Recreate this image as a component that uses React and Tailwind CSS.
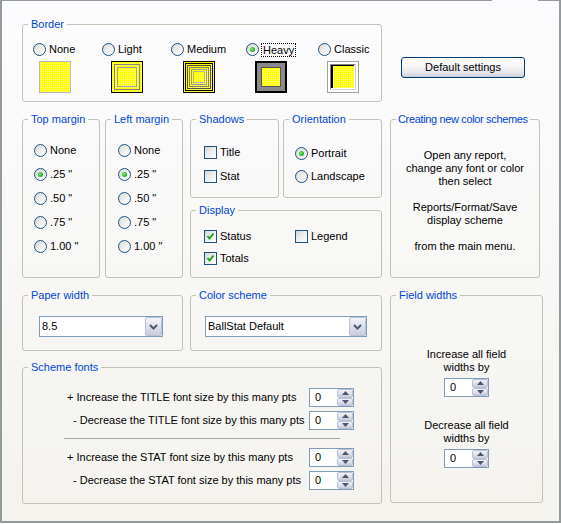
import React from "react";

function Group({ title, className, children, tight }) {
  return (
    <fieldset className={"min-w-0 shrink-0 rounded-[3px] border border-[#c3c3ba] " + className}>
      <legend
        className={
          "ml-[5px] h-[13px] whitespace-nowrap leading-[13px] text-[#0046d5] " +
          (tight ? "px-[2px] tracking-[-0.35px]" : "px-[3px]")
        }
      >
        {title}
      </legend>
      {children}
    </fieldset>
  );
}

function Radio({ checked }) {
  return (
    <span className="flex h-[13px] w-[13px] shrink-0 items-center justify-center rounded-full border border-[#1c5180] bg-[linear-gradient(135deg,#d6d6d0_0%,#ececea_45%,#ffffff_100%)]">
      {checked && (
        <span className="h-[5px] w-[5px] rounded-full bg-[radial-gradient(circle_at_40%_40%,#8cf08c_0%,#2fbf2f_45%,#1a8f1a_100%)]" />
      )}
    </span>
  );
}

function Check({ checked }) {
  return (
    <span className="flex h-[13px] w-[13px] shrink-0 items-center justify-center border border-[#1c5180] bg-[linear-gradient(135deg,#d6d6d0_0%,#ececea_45%,#ffffff_100%)]">
      {checked && (
        <svg width="9" height="9" viewBox="0 0 9 9">
          <polyline points="1.5,4 3.5,6.5 7.5,1.5" fill="none" stroke="#21a121" strokeWidth="2" />
        </svg>
      )}
    </span>
  );
}

function RadioItem({ checked, label, className = "" }) {
  return (
    <div className={"flex h-[13px] items-center gap-[3px] " + className}>
      <Radio checked={checked} />
      <span className="whitespace-nowrap leading-[13px]">{label}</span>
    </div>
  );
}

function CheckItem({ checked, label }) {
  return (
    <div className="flex h-[13px] items-center gap-[3px]">
      <Check checked={checked} />
      <span className="leading-[13px]">{label}</span>
    </div>
  );
}

function YellowPattern({ id }) {
  return (
    <defs>
      <pattern id={id} width="2" height="2" patternUnits="userSpaceOnUse">
        <rect width="2" height="2" fill="#ffff00" />
        <rect width="1" height="1" fill="#ffff90" />
      </pattern>
    </defs>
  );
}

function Swatch({ kind }) {
  const id = "yp-" + kind;
  const fill = `url(#${id})`;
  return (
    <svg width="32" height="32" viewBox="0 0 32 32" shapeRendering="crispEdges" className="block shrink-0">
      <YellowPattern id={id} />
      {kind === "none" && <rect x="0.5" y="0.5" width="31" height="31" fill={fill} stroke="#b8b8b8" />}
      {kind === "light" && (
        <g>
          <rect x="0.5" y="0.5" width="31" height="31" fill={fill} stroke="#000" />
          <rect x="3.5" y="3.5" width="25" height="25" fill="none" stroke="#808080" />
          <rect x="6.5" y="6.5" width="19" height="19" fill="none" stroke="#a0a0a0" />
        </g>
      )}
      {kind === "medium" && (
        <g>
          <rect x="0.5" y="0.5" width="31" height="31" fill={fill} stroke="#000" />
          <rect x="2.5" y="2.5" width="27" height="27" fill="none" stroke="#000" />
          <rect x="4.5" y="4.5" width="23" height="23" fill="none" stroke="#505050" />
          <rect x="6.5" y="6.5" width="19" height="19" fill="none" stroke="#808080" />
          <rect x="8.5" y="8.5" width="15" height="15" fill="none" stroke="#989898" />
          <rect x="10.5" y="10.5" width="11" height="11" fill="none" stroke="#b0b0b0" />
        </g>
      )}
      {kind === "heavy" && (
        <g>
          <rect x="0" y="0" width="32" height="32" fill="#000" />
          <rect x="2" y="2" width="28" height="28" fill="#8a8a8a" />
          <rect x="6" y="6" width="20" height="20" fill="#555" />
          <rect x="7" y="7" width="18" height="18" fill={fill} />
        </g>
      )}
      {kind === "classic" && (
        <g>
          <rect x="0.5" y="0.5" width="31" height="31" fill="#fff" stroke="#a0a0a0" />
          <rect x="3" y="3" width="26" height="26" fill="#d4d0c8" />
          <rect x="3" y="3" width="25" height="25" fill="#808080" />
          <rect x="4" y="4" width="24" height="24" fill="#fff" />
          <rect x="4" y="4" width="23" height="23" fill="#000" />
          <rect x="6" y="5" width="21" height="22" fill={fill} />
        </g>
      )}
    </svg>
  );
}

function Combo({ value, width }) {
  return (
    <div className="flex h-[21px] border border-[#7f9db9] bg-white" style={{ width }}>
      <span className="flex-1 pl-[2px] leading-[19px]">{value}</span>
      <span className="flex h-[19px] w-[17px] items-center justify-center rounded-[2px] border border-[#b9c1d6] bg-[linear-gradient(#f2f2f6_0%,#dedee8_55%,#c9cbdb_100%)]">
        <svg width="9" height="6" viewBox="0 0 9 6">
          <polyline points="1,1 4.5,4.5 8,1" fill="none" stroke="#4d5870" strokeWidth="2" />
        </svg>
      </span>
    </div>
  );
}

function SpinBtn({ up }) {
  return (
    <span className="flex flex-1 items-center justify-center rounded-[2px] border border-[#b9c1d6] bg-[linear-gradient(#f2f2f6_0%,#dedee8_55%,#c9cbdb_100%)]">
      <svg width="7" height="4" viewBox="0 0 7 4">
        {up ? <polygon points="0,4 3.5,0 7,4" fill="#4d5870" /> : <polygon points="0,0 3.5,4 7,0" fill="#4d5870" />}
      </svg>
    </span>
  );
}

function Spin() {
  return (
    <div className="flex h-[19px] w-[45px] shrink-0 border border-[#7f9db9] bg-white">
      <span className="flex-1 pl-[5px] leading-[17px]">0</span>
      <div className="flex h-[17px] w-[16px] flex-col">
        <SpinBtn up />
        <SpinBtn />
      </div>
    </div>
  );
}

function FontRow({ label, indent }) {
  return (
    <div className="flex h-[19px] items-center pl-[44px]">
      <span className={"w-[242px] whitespace-nowrap leading-[13px] " + (indent ? "pl-[6px]" : "")}>{label}</span>
      <Spin />
    </div>
  );
}

export default function App() {
  const margins = ["None", '.25 "', '.50 "', '.75 "', '1.00 "'];
  return (
    <div className="h-[524px] w-[561px] bg-white font-['Liberation_Sans',Arial,sans-serif] text-[11px] text-black">
      <div className="relative h-[523px] w-[561px] border-t border-r-2 border-b-2 border-l-2 border-[#919b9c] bg-[linear-gradient(#fcfcfe,#f4f3ee)]">
        <div className="absolute left-[490px] top-[-1px] h-px w-[46px] bg-[#fcfcfe]" />
        <div className="pl-[20px] pt-[17px]">
          {/* Row 1 */}
          <div className="flex">
            <Group title="Border" className="h-[84px] w-[360px]">
              <div className="mt-[12px] flex pl-[10px]">
                <RadioItem label="None" className="w-[69px]" />
                <RadioItem label="Light" className="w-[69px]" />
                <RadioItem label="Medium" className="w-[75px]" />
                <div className="flex h-[13px] w-[72px] items-center gap-[2px]">
                  <Radio checked />
                  <span className="h-[14px] border border-dotted border-[#000] px-[1px] leading-[12px]">Heavy</span>
                </div>
                <RadioItem label="Classic" />
              </div>
              <div className="mt-[5px] flex gap-[40px] pl-[16px]">
                <Swatch kind="none" />
                <Swatch kind="light" />
                <Swatch kind="medium" />
                <Swatch kind="heavy" />
                <Swatch kind="classic" />
              </div>
            </Group>
            <button className="ml-[19px] mt-[39px] h-[21px] w-[124px] rounded-[3px] border border-[#003c74] bg-[linear-gradient(#ffffff_0%,#f6f6f8_45%,#e2e2ea_80%,#cdcdda_100%)] text-center leading-[19px]">
              Default settings
            </button>
          </div>

          {/* Row 2 */}
          <div className="mt-[11px] flex">
            <Group title="Top margin" className="h-[165px] w-[78px]">
              <div className="mt-[18px] flex flex-col gap-[11px] pl-[11px]">
                {margins.map((m, i) => (
                  <RadioItem key={m} label={m} checked={i === 1} />
                ))}
              </div>
            </Group>
            <Group title="Left margin" className="ml-[5px] h-[165px] w-[78px]">
              <div className="mt-[18px] flex flex-col gap-[11px] pl-[12px]">
                {margins.map((m, i) => (
                  <RadioItem key={m} label={m} checked={i === 1} />
                ))}
              </div>
            </Group>
            <div className="ml-[7px] flex w-[192px] flex-col">
              <div className="flex">
                <Group title="Shadows" className="h-[85px] w-[89px]">
                  <div className="mt-[20px] flex flex-col gap-[11px] pl-[13px]">
                    <CheckItem label="Title" />
                    <CheckItem label="Stat" />
                  </div>
                </Group>
                <Group title="Orientation" className="ml-[4px] h-[85px] w-[99px]">
                  <div className="mt-[21px] flex flex-col gap-[10px] pl-[11px]">
                    <RadioItem label="Portrait" checked />
                    <RadioItem label="Landscape" />
                  </div>
                </Group>
              </div>
              <Group title="Display" className="mt-[6px] h-[74px] w-[192px]">
                <div className="mt-[13px] grid grid-cols-[91px_auto] gap-y-[9px] pl-[13px]">
                  <CheckItem label="Status" checked />
                  <CheckItem label="Legend" />
                  <CheckItem label="Totals" checked />
                </div>
              </Group>
            </div>
            <Group title="Creating new color schemes" tight className="ml-[8px] h-[165px] w-[150px]">
              <div className="mt-[23px] text-center leading-[13px]">
                <div>Open any report,</div>
                <div>change any font or color</div>
                <div>then select</div>
                <div className="h-[13px]" />
                <div>Reports/Format/Save</div>
                <div>display scheme</div>
                <div className="h-[13px]" />
                <div>from the main menu.</div>
              </div>
            </Group>
          </div>

          {/* Row 3 */}
          <div className="mt-[11px] flex">
            <div className="flex w-[360px] flex-col">
              <div className="flex">
                <Group title="Paper width" className="h-[62px] w-[161px]">
                  <div className="mt-[14px] pl-[16px]">
                    <Combo value="8.5" width={124} />
                  </div>
                </Group>
                <Group title="Color scheme" className="ml-[7px] h-[62px] w-[192px]">
                  <div className="mt-[14px] pl-[14px]">
                    <Combo value="BallStat Default" width={162} />
                  </div>
                </Group>
              </div>
              <Group title="Scheme fonts" className="mt-[10px] h-[143px] w-[360px]">
                <div className="mt-[14px] flex flex-col">
                  <FontRow label="+ Increase the TITLE font size by this many pts" />
                  <div className="mt-[4px]">
                    <FontRow label="- Decrease the TITLE font size by this many pts" indent />
                  </div>
                  <div className="ml-[41px] mt-[8px] h-px w-[276px] bg-[#a7a7a7]" />
                  <div className="mt-[9px]">
                    <FontRow label="+ Increase the STAT font size by this many pts" />
                  </div>
                  <div className="mt-[4px]">
                    <FontRow label="- Decrease the STAT font size by this many pts" indent />
                  </div>
                </div>
              </Group>
            </div>
            <Group title="Field widths" className="ml-[8px] h-[214px] w-[153px]">
              <div className="flex flex-col items-center">
                <div className="mt-[46px] text-center leading-[13px]">
                  <div>Increase all field</div>
                  <div>widths by</div>
                </div>
                <div className="mt-[4px]">
                  <Spin />
                </div>
                <div className="mt-[22px] text-center leading-[13px]">
                  <div>Decrease all field</div>
                  <div>widths by</div>
                </div>
                <div className="mt-[4px]">
                  <Spin />
                </div>
              </div>
            </Group>
          </div>
        </div>
      </div>
    </div>
  );
}
